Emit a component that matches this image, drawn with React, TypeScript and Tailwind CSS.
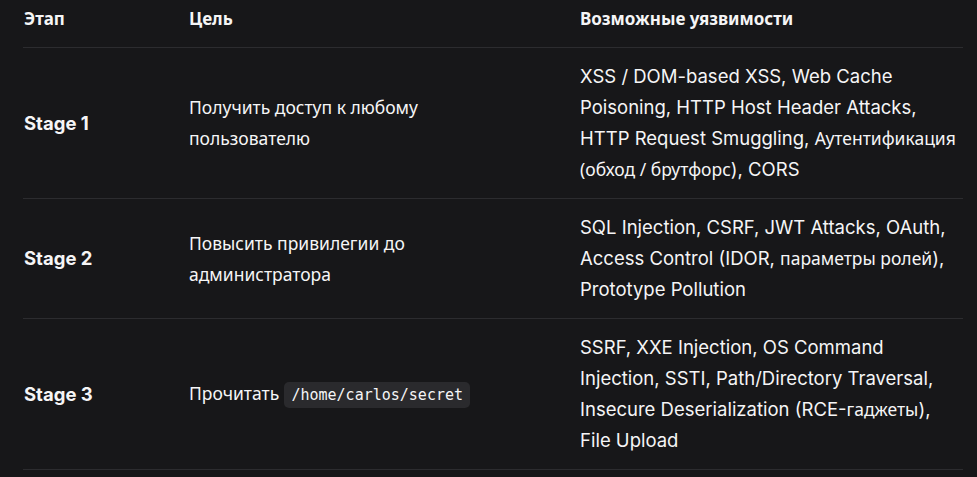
import React from 'react';

const CYR = /([\u0400-\u04FF]+(?:[ \-–()/,.]*[\u0400-\u04FF]+)*)/;

// Cyrillic runs fall back to a humanist face, Latin stays on Inter
const Mixed: React.FC<{ text: string }> = ({ text }) => (
  <>
    {text.split(CYR).map((part, i) =>
      CYR.test(part) ? (
        <span key={i} className="font-['Noto_Sans',sans-serif] text-[17.5px]">{part}</span>
      ) : (
        <React.Fragment key={i}>{part}</React.Fragment>
      )
    )}
  </>
);

const rows = [
  {
    stage: 'Stage 1',
    goal: <Mixed text="Получить доступ к любому пользователю" />,
    vulns: 'XSS / DOM-based XSS, Web Cache Poisoning, HTTP Host Header Attacks, HTTP Request Smuggling, Аутентификация (обход / брутфорс), CORS',
  },
  {
    stage: 'Stage 2',
    goal: <Mixed text="Повысить привилегии до администратора" />,
    vulns: 'SQL Injection, CSRF, JWT Attacks, OAuth, Access Control (IDOR, параметры ролей), Prototype Pollution',
  },
  {
    stage: 'Stage 3',
    goal: (
      <>
        <Mixed text="Прочитать" />{' '}
        <code className="font-['DejaVu_Sans_Mono',monospace] text-[15px] bg-[#2a2a2d] rounded-[5px] px-[7px] py-[4px]">/home/carlos/secret</code>
      </>
    ),
    vulns: 'SSRF, XXE Injection, OS Command Injection, SSTI, Path/Directory Traversal, Insecure Deserialization (RCE-гаджеты), File Upload',
  },
];

const App: React.FC = () => {
  return (
    <div className="w-[977px] h-[477px] overflow-hidden bg-[#171719] text-[#f5f5f6] font-['Inter',sans-serif] text-[18.5px] leading-[31px] pl-[23px]">
      <div className="w-[940px]">
        <div className="grid grid-cols-[166px_391px_383px] border-b border-[#2c2c2f] pt-[3px] pb-[13px] font-bold font-['Noto_Sans',sans-serif] text-[17px]">
          <div className="pl-[1px]">Этап</div>
          <div>Цель</div>
          <div>Возможные уязвимости</div>
        </div>
        {rows.map(r => (
          <div key={r.stage} className="grid grid-cols-[166px_391px_383px] items-center border-b border-[#2c2c2f] py-[13px]">
            <div className="pl-[1px] font-bold text-[18.5px]">{r.stage}</div>
            <div className="pr-[80px]">{r.goal}</div>
            <div><Mixed text={r.vulns} /></div>
          </div>
        ))}
      </div>
    </div>
  );
};

export default App;
